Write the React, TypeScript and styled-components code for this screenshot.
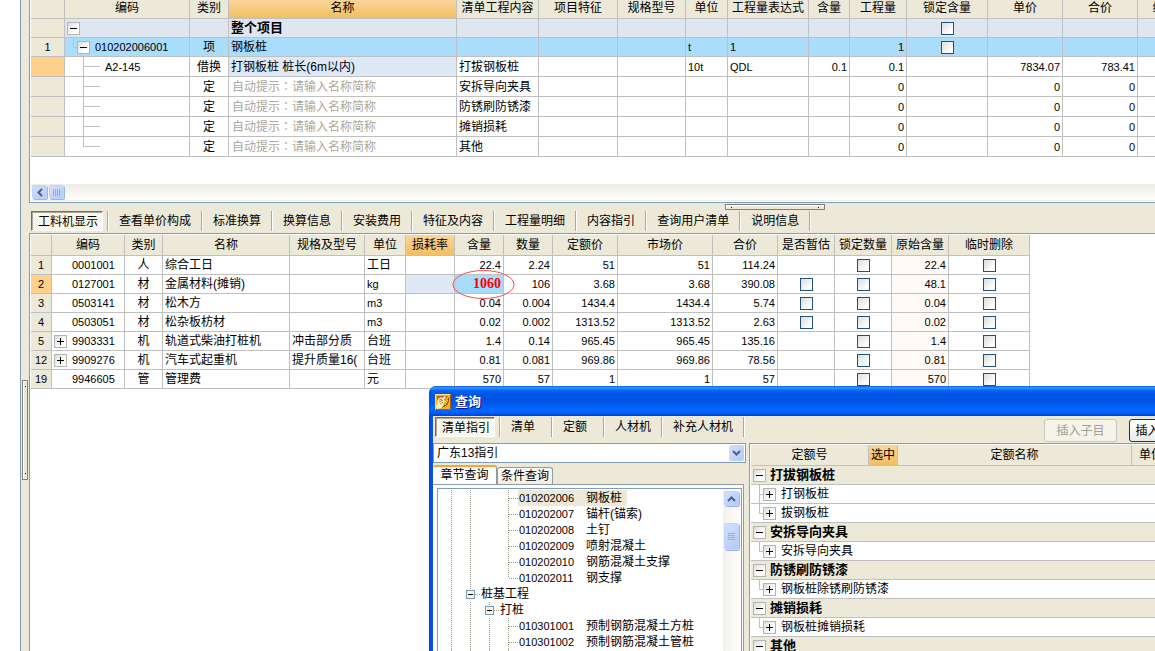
import React from 'react';
import styled, { createGlobalStyle, css } from 'styled-components';

const C = {
  face: '#ece9d8',
  line: '#c0c0c0',
  edge: '#7f9db9',
  hint: '#aca899',
  orange: 'linear-gradient(#fbd59a, #f2bf60)',
};

const GlobalStyle = createGlobalStyle`
  * { box-sizing: border-box; }
  body { margin: 0; background: #fff; }
  body, button, select, input, table {
    font-family: "Liberation Sans", "Noto Sans CJK SC", sans-serif;
    font-size: 12px;
    line-height: 14px;
    color: #000;
  }
`;

/* ---------- frame ---------- */

const Screen = styled.div`
  position: relative;
  height: 100vh;
  overflow: hidden;
  padding-left: 20px;
`;

const Workspace = styled.div`
  display: flex;
  height: 100%;
  border-left: 1px solid ${C.edge};
  background: ${C.face};
`;

const SideSplitter = styled.div`
  flex: 0 0 8px;
  padding: 380px 1px 0;
`;

const Handle = styled.div<{ $vertical?: boolean }>`
  display: flex;
  flex-direction: ${p => (p.$vertical ? 'column' : 'row')};
  justify-content: space-between;
  align-items: center;
  width: ${p => (p.$vertical ? 6 : 100)}px;
  height: ${p => (p.$vertical ? 100 : 6)}px;
  padding: ${p => (p.$vertical ? '5px 0' : '0 5px')};
  border: 1px solid #808080;
  box-shadow: inset 1px 1px #fff;

  &::before,
  &::after {
    content: '';
    width: 1px;
    height: 1px;
    background: #000080;
  }
`;

const Main = styled.main`
  flex: 1;
  min-width: 0;
  display: flex;
  flex-direction: column;
`;

const UpperPanel = styled.section`
  overflow: hidden;
  padding-left: 1px;
  background: #fff;
  border-left: 1px solid ${C.edge};
  border-bottom: 1px solid ${C.edge};
`;

const RowSplitter = styled.div`
  height: 8px;
  padding: 1px 0 0 696px;
`;

const LowerPanel = styled.section`
  flex: 1;
  overflow: hidden;
  padding: 1px 0 0 1px;
  background: #fff;
  border-left: 1px solid ${C.edge};
  border-top: 1px solid ${C.edge};
`;

/* ---------- tabs ---------- */

const TabBar = styled.div<{ $height: number }>`
  display: flex;
  align-items: flex-start;
  height: ${p => p.$height}px;
  padding-left: 2px;
`;

const Tab = styled.button<{ $active?: boolean }>`
  height: 20px;
  padding: 0 10px;
  border: 0;
  background: none;
  text-align: left;
  white-space: nowrap;
  border-right: 1px solid #aca899;
  box-shadow: 1px 0 #fff;
  margin-right: 1px;
  min-width: 51px;

  ${p =>
    p.$active &&
    css`
      padding: 1px 4px 0 6px;
      border: 1px solid #fff;
      border-top: 1px solid #716f64;
      border-left: 1px solid #716f64;
      box-shadow: inset 1px 1px #aca899;
      margin-right: 4px;
      background: conic-gradient(#fff 25%, #f1efe2 0 50%, #fff 0 75%, #f1efe2 0) 0 0 / 2px 2px;
    `}
`;

const TabDivider = styled.span`
  width: 1px;
  height: 20px;
  margin-right: 1px;
  background: #aca899;
  box-shadow: 1px 0 #fff;
`;

/* ---------- grids ---------- */

const Grid = styled.table<{ $width: string }>`
  width: ${p => p.$width};
  table-layout: fixed;
  border-collapse: separate;
  border-spacing: 0;
`;

const Row = styled.tr<{ $height: number; $bg?: string }>`
  height: ${p => p.$height}px;
  background: ${p => p.$bg ?? '#fff'};
`;

const cellBox = css`
  padding: 0;
  overflow: hidden;
  white-space: nowrap;
  border-right: 1px solid ${C.line};
  border-bottom: 1px solid ${C.line};
`;

const Head = styled.th<{ $hot?: boolean; $lift?: boolean }>`
  ${cellBox}
  ${p => p.$lift && 'padding-bottom: 3px;'}
  font-weight: 400;
  background: ${p => (p.$hot ? C.orange : C.face)};
`;

const RowNo = styled.th<{ $hot?: boolean }>`
  ${cellBox}
  font-size: 11px;
  font-weight: 400;
  background: ${p => (p.$hot ? '#ffd08a' : C.face)};
`;

type Align = 'left' | 'center' | 'right';

const Cell = styled.td<{ $align?: Align; $bg?: string; $num?: boolean; $pad?: number }>`
  ${cellBox}
  padding: 0 ${p => (p.$align === 'center' ? 0 : p.$pad ?? 2)}px;
  text-align: ${p => p.$align ?? 'left'};
  font-size: ${p => (p.$num ? 11 : 12)}px;
  background: ${p => p.$bg ?? 'transparent'};
`;

const Strong = styled.strong`
  font-size: 13px;
  font-weight: 700;
`;

const Hint = styled.span`
  padding-left: 1px;
  color: ${C.hint};
`;

/* the traditional face sets the colon in the middle of its square */
const Colon = styled.span`
  font-family: "Noto Sans CJK TC", sans-serif;
`;

const Check = styled.input.attrs({ type: 'checkbox' })`
  appearance: none;
  display: block;
  width: 13px;
  height: 13px;
  margin: 1px auto 0;
  border: 1px solid #1c5180;
  background: linear-gradient(135deg, #dcdcd7, #fff 80%);
`;

const ToggleBox = styled.button`
  flex: none;
  display: block;
  width: 13px;
  height: 13px;
  padding: 0;
  border: 1px solid #b4b4b0;
  background: linear-gradient(135deg, #dcdcd7, #fff 70%);

  svg {
    display: block;
  }
`;

const Toggle = ({ open, label }: { open?: boolean; label: string }) => (
  <ToggleBox aria-label={label} aria-expanded={!!open}>
    <svg width="11" height="11" shapeRendering="crispEdges" stroke="#000" fill="none">
      <path d={open ? 'M2 5.5h7' : 'M2 5.5h7M5.5 2v7'} />
    </svg>
  </ToggleBox>
);

const Code = styled.div<{ $indent?: number; $gap?: number }>`
  display: flex;
  align-items: center;
  gap: ${p => p.$gap ?? 5}px;
  padding-left: ${p => p.$indent ?? 0}px;
  font-size: 11px;
`;

const Guide = styled.svg`
  flex: none;
  display: block;
  overflow: visible;
  stroke: ${C.line};
  fill: none;
  shape-rendering: crispEdges;
`;

/* ---------- upper grid ---------- */

const UPPER_COLS = [34, 125, 39, 228, 82, 79, 68, 42, 81, 41, 57, 81, 75, 75, 78];
const UPPER_HEADS = ['', '编码', '类别', '名称', '清单工程内容', '项目特征', '规格型号', '单位', '工程量表达式', '含量', '工程量', '锁定含量', '单价', '合价', '综合单价'];
const HINT_ROWS = ['安拆导向夹具', '防锈刷防锈漆', '摊销损耗', '其他'];

const Empty = ({ n }: { n: number }) => (
  <>
    {Array.from({ length: n }, (_, i) => (
      <Cell key={i} />
    ))}
  </>
);

const Branch = ({ last }: { last?: boolean }) => (
  <Guide width="17" height="19">
    <path d={`M0.5 0V${last ? 10 : 19}M0 9.5h17`} />
  </Guide>
);

const UpperGrid = () => (
  <Grid $width="1185px">
    <colgroup>
      {UPPER_COLS.map((w, i) => (
        <col key={i} style={{ width: w }} />
      ))}
    </colgroup>
    <thead>
      <Row $height={19}>
        {UPPER_HEADS.map((h, i) => (
          <Head key={i} $hot={h === '名称'} $lift>
            {h}
          </Head>
        ))}
      </Row>
    </thead>
    <tbody>
      <Row $height={19} $bg="#dee6f0">
        <RowNo />
        <Cell>
          <Code>
            <Toggle open label="整个项目" />
          </Code>
        </Cell>
        <Cell />
        <Cell>
          <Strong>整个项目</Strong>
        </Cell>
        <Empty n={7} />
        <Cell $align="center">
          <Check aria-label="锁定含量 整个项目" />
        </Cell>
        <Empty n={3} />
      </Row>
      <Row $height={19} $bg="#aadcfb">
        <RowNo>1</RowNo>
        <Cell>
          <Code $indent={6} $gap={0}>
            <Guide width="4" height="18">
              <path d="M0.5 -3V9.5H4" />
            </Guide>
            <Code $gap={5}>
              <Toggle open label="010202006001" />
              010202006001
            </Code>
          </Code>
        </Cell>
        <Cell $align="center">项</Cell>
        <Cell>钢板桩</Cell>
        <Empty n={3} />
        <Cell $num>t</Cell>
        <Cell $num>1</Cell>
        <Cell />
        <Cell $num $align="right">1</Cell>
        <Cell $align="center">
          <Check aria-label="锁定含量 钢板桩" />
        </Cell>
        <Empty n={3} />
      </Row>
      <Row $height={20}>
        <RowNo $hot />
        <Cell>
          <Code $indent={16}>
            <Branch />
            A2-145
          </Code>
        </Cell>
        <Cell $align="center">借换</Cell>
        <Cell $bg="#dfe9f6">打钢板桩 桩长(6m以内)</Cell>
        <Cell>打拔钢板桩</Cell>
        <Empty n={2} />
        <Cell $num>10t</Cell>
        <Cell $num>QDL</Cell>
        <Cell $num $align="right">0.1</Cell>
        <Cell $num $align="right">0.1</Cell>
        <Cell />
        <Cell $num $align="right">7834.07</Cell>
        <Cell $num $align="right">783.41</Cell>
        <Cell />
      </Row>
      {HINT_ROWS.map((name, i) => (
        <Row key={name} $height={20}>
          <RowNo />
          <Cell>
            <Code $indent={16}>
              <Branch last={i === HINT_ROWS.length - 1} />
            </Code>
          </Cell>
          <Cell $align="center">定</Cell>
          <Cell>
            <Hint>
              自动提示<Colon>：</Colon>请输入名称简称
            </Hint>
          </Cell>
          <Cell>{name}</Cell>
          <Empty n={4} />
          <Cell />
          <Cell $num $align="right">0</Cell>
          <Cell />
          <Cell $num $align="right">0</Cell>
          <Cell $num $align="right">0</Cell>
          <Cell />
        </Row>
      ))}
    </tbody>
  </Grid>
);

/* ---------- scroll bars ---------- */

const HScroll = styled.div`
  display: flex;
  gap: 2px;
  height: 17px;
  margin: 27px 0 1px;
  padding: 1px;
  background: linear-gradient(#efece8, #fefefc);
  border-bottom: 1px solid #eeede5;
`;

const VScroll = styled.div`
  flex: 0 0 17px;
  display: flex;
  flex-direction: column;
  align-items: center;
  gap: 17px;
  padding-top: 2px;
  background: linear-gradient(90deg, #f3f1ec, #fefefb);
`;

const ScrollButton = styled.button<{ $h: number; $w: number }>`
  display: flex;
  align-items: center;
  justify-content: center;
  width: ${p => p.$w}px;
  height: ${p => p.$h}px;
  padding: 0;
  border: 1px solid #c3d3fb;
  border-radius: 2px;
  box-shadow: 1px 1px #9bb5e6;
  background: linear-gradient(135deg, #d3e0fd, #b5c9f7);
`;

/* ---------- lower grid ---------- */

const LOWER_TABS = ['查看单价构成', '标准换算', '换算信息', '安装费用', '特征及内容', '工程量明细', '内容指引', '查询用户清单', '说明信息'];
const LOWER_COLS = [21, 73, 38, 127, 75, 41, 49, 49, 49, 65, 95, 65, 57, 57, 57, 81];
const LOWER_HEADS = ['', '编码', '类别', '名称', '规格及型号', '单位', '损耗率', '含量', '数量', '定额价', '市场价', '合价', '是否暂估', '锁定数量', '原始含量', '临时删除'];

type Resource = {
  no: string;
  code: string;
  kind: string;
  name: string;
  spec?: string;
  unit: string;
  nums: string[];
  origin: string;
  est?: boolean;
  group?: boolean;
};

const RESOURCES: Resource[] = [
  { no: '1', code: '0001001', kind: '人', name: '综合工日', unit: '工日', nums: ['22.4', '2.24', '51', '51', '114.24'], origin: '22.4' },
  { no: '2', code: '0127001', kind: '材', name: '金属材料(摊销)', unit: 'kg', nums: ['1060', '106', '3.68', '3.68', '390.08'], origin: '48.1', est: true },
  { no: '3', code: '0503141', kind: '材', name: '松木方', unit: 'm3', nums: ['0.04', '0.004', '1434.4', '1434.4', '5.74'], origin: '0.04', est: true },
  { no: '4', code: '0503051', kind: '材', name: '松杂板枋材', unit: 'm3', nums: ['0.02', '0.002', '1313.52', '1313.52', '2.63'], origin: '0.02', est: true },
  { no: '5', code: '9903331', kind: '机', name: '轨道式柴油打桩机', spec: '冲击部分质', unit: '台班', nums: ['1.4', '0.14', '965.45', '965.45', '135.16'], origin: '1.4', group: true },
  { no: '12', code: '9909276', kind: '机', name: '汽车式起重机', spec: '提升质量16(', unit: '台班', nums: ['0.81', '0.081', '969.86', '969.86', '78.56'], origin: '0.81', group: true },
  { no: '19', code: '9946605', kind: '管', name: '管理费', unit: '元', nums: ['570', '57', '1', '1', '57'], origin: '570' },
];

const MarkedCell = styled(Cell)`
  position: relative;
  overflow: visible;
  background: #a5dbfb;
  font-family: "Liberation Serif", serif;
  font-size: 14px;
  font-weight: 700;
  color: #f00;
`;

const RedRing = styled.svg`
  position: absolute;
  left: -3px;
  top: -5px;
  pointer-events: none;
`;

const LowerGrid = () => (
  <Grid $width="999px">
    <colgroup>
      {LOWER_COLS.map((w, i) => (
        <col key={i} style={{ width: w }} />
      ))}
    </colgroup>
    <thead>
      <Row $height={21}>
        {LOWER_HEADS.map((h, i) => (
          <Head key={i} $hot={h === '损耗率'}>
            {h}
          </Head>
        ))}
      </Row>
    </thead>
    <tbody>
      {RESOURCES.map(r => {
        const current = r.no === '2';
        return (
          <Row key={r.no} $height={19}>
            <RowNo $hot={current}>{r.no}</RowNo>
            <Cell>
              <Code $indent={r.group ? 0 : 18}>
                {r.group && <Toggle label={r.name} />}
                {r.code}
              </Code>
            </Cell>
            <Cell $align="center">{r.kind}</Cell>
            <Cell>{r.name}</Cell>
            <Cell>{r.spec}</Cell>
            <Cell $num={/^[a-z]/.test(r.unit)}>{r.unit}</Cell>
            <Cell $bg={current ? '#dfe9f6' : undefined} />
            {r.nums.map((n, i) =>
              current && i === 0 ? (
                <MarkedCell key={i} $align="right">
                  {n}
                  <RedRing width="64" height="30" fill="none" stroke="#f0504f">
                    <ellipse cx="31.5" cy="14.5" rx="30.5" ry="14" />
                  </RedRing>
                </MarkedCell>
              ) : (
                <Cell key={i} $num $align="right">
                  {n}
                </Cell>
              ),
            )}
            <Cell $align="center">{r.est && <Check aria-label={`是否暂估 ${r.name}`} />}</Cell>
            <Cell $align="center">
              <Check aria-label={`锁定数量 ${r.name}`} />
            </Cell>
            <Cell $num $align="right" $bg="#fffaf5">
              {r.origin}
            </Cell>
            <Cell $align="center">
              <Check aria-label={`临时删除 ${r.name}`} />
            </Cell>
          </Row>
        );
      })}
    </tbody>
  </Grid>
);

/* ---------- query window ---------- */

const Dialog = styled.section`
  position: absolute;
  left: 429px;
  right: -60px;
  top: 386px;
  bottom: 0;
  display: flex;
  flex-direction: column;
  overflow: hidden;
  border-radius: 7px 7px 0 0;
  background: linear-gradient(90deg, #0831d9, #0855dd 2px, #0855dd);
`;

const TitleBar = styled.header`
  display: flex;
  align-items: center;
  gap: 4px;
  height: 30px;
  padding: 2px 0 0 6px;
  background: linear-gradient(
    #0a5be0 0,
    #3c96ff 2px,
    #0668f8 4px,
    #0054e3 8px,
    #0055e5 16px,
    #0066ff 22px,
    #0066ff 26px,
    #003dd7 30px
  );
`;

const Title = styled.h1`
  margin: 0;
  font-size: 13px;
  line-height: 16px;
  font-weight: 700;
  color: #fff;
  text-shadow: 1px 1px #0f1089;
`;

const DialogBody = styled.div`
  flex: 1;
  min-height: 0;
  display: flex;
  flex-direction: column;
  margin: 0 4px;
  background: ${C.face};
`;

const Toolbar = styled.div`
  display: flex;
  height: 27px;
  padding: 1px 9px 0 0;
`;

const Actions = styled.div`
  display: flex;
  gap: 12px;
  margin: 2px 0 0 auto;
`;

const Action = styled.button`
  width: 73px;
  height: 23px;
  padding: 0 5px;
  border: 1px solid #003c74;
  border-radius: 3px;
  background: linear-gradient(#fff, #ecebe6);
  white-space: nowrap;

  &:disabled {
    border-color: #c9c7ba;
    background: #f5f4ea;
    color: #a1a192;
  }
`;

const Columns = styled.div`
  flex: 1;
  min-height: 0;
  display: flex;
  gap: 3px;
`;

const LeftPane = styled.div`
  flex: 0 0 313px;
  display: flex;
  flex-direction: column;
  min-height: 0;
`;

const Combo = styled.div`
  display: flex;
  position: relative;
  height: 20px;
`;

const ComboSelect = styled.select`
  appearance: none;
  width: 100%;
  height: 20px;
  padding: 0 20px 0 3px;
  border: 1px solid ${C.edge};
  border-radius: 0;
  background: #fff;
`;

const ComboArrow = styled.span`
  position: absolute;
  right: 2px;
  top: 2px;
  display: flex;
  align-items: center;
  justify-content: center;
  width: 15px;
  height: 16px;
  border-radius: 2px;
  background: linear-gradient(135deg, #d3e0fd, #b5c9f7);
  pointer-events: none;
`;

const SubTabs = styled.div`
  display: flex;
  align-items: flex-end;
  height: 19px;
  margin-top: 2px;
`;

const SubTab = styled.button<{ $active?: boolean }>`
  width: ${p => (p.$active ? 64 : 56)}px;
  height: ${p => (p.$active ? 20 : 17)}px;
  padding: 0;
  border: 1px solid #919b9c;
  border-bottom: 0;
  border-radius: 3px 3px 0 0;
  background: linear-gradient(#fff, #eeede6);

  ${p =>
    p.$active &&
    css`
      border-left: 0;
      border-top: 2px solid #f5a833;
      margin-bottom: -1px;
      padding-bottom: 2px;
      background: #fcfcfe;
    `}
`;

const TreePanel = styled.div`
  flex: 1;
  min-height: 0;
  display: flex;
  margin-right: 2px;
  padding: 3px 1px 0 4px;
  background: #fcfcfe;
  border-top: 1px solid #919b9c;
  border-right: 1px solid #919b9c;
`;

const TreeBox = styled.div`
  flex: 1;
  display: flex;
  overflow: hidden;
  padding-right: 1px;
  background: #fff;
  border: 1px solid ${C.edge};
  border-bottom: 0;
`;

const Tree = styled.ul`
  flex: 1;
  margin: 0;
  padding: 1px 0 0 4px;
  list-style: none;
`;

const TreeItem = styled.li`
  display: flex;
  height: 16px;
`;

const TreeLabel = styled.span<{ $selected?: boolean }>`
  display: flex;
  align-items: center;
  padding: 0 5px 0 1px;
  white-space: nowrap;
  background: ${p => (p.$selected ? C.face : 'none')};
`;

const TreeCode = styled.span`
  width: 67px;
  font-size: 11px;
`;

const Slot = styled.svg`
  display: block;
  width: 19px;
  height: 16px;
  fill: none;
  shape-rendering: crispEdges;
`;

type SlotKind = 'v' | 't' | 'l' | 'm' | ' ';

const TreeSlot = ({ kind }: { kind: SlotKind }) => (
  <Slot viewBox="0 0 19 16" aria-hidden="true">
    {kind !== ' ' && (
      <g stroke="#9c9a8c" strokeDasharray="1 1">
        <path d={kind === 'l' || kind === 'm' ? 'M9.5 0V8' : 'M9.5 0V16'} />
        {kind !== 'v' && <path d="M10 8.5H19" />}
      </g>
    )}
    {kind === 'm' && (
      <>
        <rect x="5.5" y="4.5" width="8" height="8" fill="#f4f3ee" stroke="#7898b5" />
        <path d="M7 8.5h5" stroke="#000" />
      </>
    )}
  </Slot>
);

type Node = { slots: SlotKind[]; code?: string; name: string };

const LEAF: SlotKind[] = ['v', 'v', ' ', 't'];
const NODES: Node[] = [
  { slots: LEAF, code: '010202006', name: '钢板桩' },
  { slots: LEAF, code: '010202007', name: '锚杆(锚索)' },
  { slots: LEAF, code: '010202008', name: '土钉' },
  { slots: LEAF, code: '010202009', name: '喷射混凝土' },
  { slots: LEAF, code: '010202010', name: '钢筋混凝土支撑' },
  { slots: ['v', 'v', ' ', 'l'], code: '010202011', name: '钢支撑' },
  { slots: ['v', 'm'], name: '桩基工程' },
  { slots: ['v', 'v', 'm'], name: '打桩' },
  { slots: ['v', 'v', 'v', 't'], code: '010301001', name: '预制钢筋混凝土方桩' },
  { slots: ['v', 'v', 'v', 't'], code: '010301002', name: '预制钢筋混凝土管桩' },
  { slots: ['v', 'v', 'v', 't'], name: '' },
];

const RightPane = styled.div`
  flex: 1;
  min-width: 0;
  overflow: hidden;
  padding: 1px 0 0 1px;
  background: #fff;
  border-left: 1px solid ${C.edge};
  border-top: 1px solid ${C.edge};
`;

const GuideCode = styled(Code)`
  font-size: 12px;
`;

const GROUPS = [
  { name: '打拔钢板桩', items: ['打钢板桩', '拔钢板桩'] },
  { name: '安拆导向夹具', items: ['安拆导向夹具'] },
  { name: '防锈刷防锈漆', items: ['钢板桩除锈刷防锈漆'] },
  { name: '摊销损耗', items: ['钢板桩摊销损耗'] },
  { name: '其他', items: [] },
];

const AppIcon = () => (
  <svg width="16" height="16" viewBox="0 0 16 16" aria-hidden="true">
    <rect width="16" height="16" fill="#f6b21c" />
    <path d="M0.5 15.5V0.5H15.5" fill="none" stroke="#ffe08a" />
    <path d="M15.5 0.5V15.5H0.5" fill="none" stroke="#a85a08" />
    <path d="M2 2h11l-3 4-8 3z" fill="#b8630d" />
    <path d="M3 5l3-2 1 1 3-2 1 1-2 3 1 1-2 3 1 1-3 3-4 1-1-4 2-1-1-2z" fill="#fff3c8" />
    <path d="M4 6l3-1M4 8l4-2M5 10l3-2" stroke="#c67a1c" fill="none" />
    <path d="M14 3l-4 7-3 4 5-3 2-4z" fill="#8c3d05" />
    <path d="M13 6l-3 5" stroke="#ffe9a0" fill="none" />
  </svg>
);

const QueryDialog = () => (
  <Dialog aria-label="查询">
    <TitleBar>
      <AppIcon />
      <Title>查询</Title>
    </TitleBar>
    <DialogBody>
      <Toolbar>
        <TabBar $height={20}>
          <Tab $active>清单指引</Tab>
          <TabDivider />
          <Tab>清单</Tab>
          <Tab>定额</Tab>
          <Tab>人材机</Tab>
          <Tab>补充人材机</Tab>
        </TabBar>
        <Actions>
          <Action disabled>插入子目</Action>
          <Action>插入清单项</Action>
        </Actions>
      </Toolbar>
      <Columns>
        <LeftPane>
          <Combo>
            <ComboSelect aria-label="指引">
              <option>广东13指引</option>
            </ComboSelect>
            <ComboArrow>
              <svg width="9" height="6" fill="none" stroke="#4d6185" strokeWidth="2">
                <path d="M1 1l3.5 3.5L8 1" />
              </svg>
            </ComboArrow>
          </Combo>
          <SubTabs>
            <SubTab $active>章节查询</SubTab>
            <SubTab>条件查询</SubTab>
          </SubTabs>
          <TreePanel>
            <TreeBox>
              <Tree>
                {NODES.map((n, i) => (
                  <TreeItem key={n.name}>
                    {n.slots.map((s, k) => (
                      <TreeSlot key={k} kind={s} />
                    ))}
                    <TreeLabel $selected={i === 0}>
                      {n.code && <TreeCode>{n.code}</TreeCode>}
                      {n.name}
                    </TreeLabel>
                  </TreeItem>
                ))}
              </Tree>
              <VScroll>
                <ScrollButton $w={15} $h={15} aria-label="向上滚动">
                  <svg width="9" height="6" fill="none" stroke="#4d6185" strokeWidth="2">
                    <path d="M1 5l3.5-3.5L8 5" />
                  </svg>
                </ScrollButton>
                <ScrollButton $w={15} $h={27} aria-label="滚动滑块">
                  <svg width="7" height="8" stroke="#8cb0f8" shapeRendering="crispEdges">
                    <path d="M0 0.5h7M0 2.5h7M0 4.5h7M0 6.5h7" />
                  </svg>
                </ScrollButton>
              </VScroll>
            </TreeBox>
          </TreePanel>
        </LeftPane>
        <RightPane>
          <Grid $width="100%">
            <colgroup>
              <col style={{ width: 118 }} />
              <col style={{ width: 29 }} />
              <col />
              <col style={{ width: 39 }} />
              <col style={{ width: 40 }} />
            </colgroup>
            <thead>
              <Row $height={21}>
                <Head>定额号</Head>
                <Head $hot>选中</Head>
                <Head>定额名称</Head>
                <Head>单位</Head>
                <Head>单价</Head>
              </Row>
            </thead>
            <tbody>
              {GROUPS.map(g => (
                <React.Fragment key={g.name}>
                  <Row $height={19} $bg={C.face}>
                    <Cell colSpan={5}>
                      <GuideCode $gap={4}>
                        <Toggle open label={g.name} />
                        <Strong>{g.name}</Strong>
                      </GuideCode>
                    </Cell>
                  </Row>
                  {g.items.map((item, i) => (
                    <Row key={item} $height={19}>
                      <Cell colSpan={5}>
                        <GuideCode $indent={6} $gap={0}>
                          <Guide width="4" height="18">
                            <path d={`M0.5 -3V${i < g.items.length - 1 ? 18 : 9}M0 9.5H4`} />
                          </Guide>
                          <GuideCode>
                            <Toggle label={`展开 ${item}`} />
                            {item}
                          </GuideCode>
                        </GuideCode>
                      </Cell>
                    </Row>
                  ))}
                </React.Fragment>
              ))}
            </tbody>
          </Grid>
        </RightPane>
      </Columns>
    </DialogBody>
  </Dialog>
);

export default function App() {
  return (
    <Screen>
      <GlobalStyle />
      <Workspace>
        <SideSplitter>
          <Handle $vertical />
        </SideSplitter>
        <Main>
          <UpperPanel>
            <UpperGrid />
            <HScroll>
              <ScrollButton $w={15} $h={14} aria-label="向左滚动">
                <svg width="6" height="9" fill="none" stroke="#4d6185" strokeWidth="2">
                  <path d="M5 1L1.5 4.5L5 8" />
                </svg>
              </ScrollButton>
              <ScrollButton $w={15} $h={14} aria-label="水平滚动滑块">
                <svg width="8" height="7" stroke="#8cb0f8" shapeRendering="crispEdges">
                  <path d="M0.5 0v7M2.5 0v7M4.5 0v7M6.5 0v7" />
                </svg>
              </ScrollButton>
            </HScroll>
          </UpperPanel>
          <RowSplitter>
            <Handle />
          </RowSplitter>
          <TabBar $height={22}>
            <Tab $active>工料机显示</Tab>
            <TabDivider />
            {LOWER_TABS.map(t => (
              <Tab key={t}>{t}</Tab>
            ))}
          </TabBar>
          <LowerPanel>
            <LowerGrid />
          </LowerPanel>
        </Main>
      </Workspace>
      <QueryDialog />
    </Screen>
  );
}
